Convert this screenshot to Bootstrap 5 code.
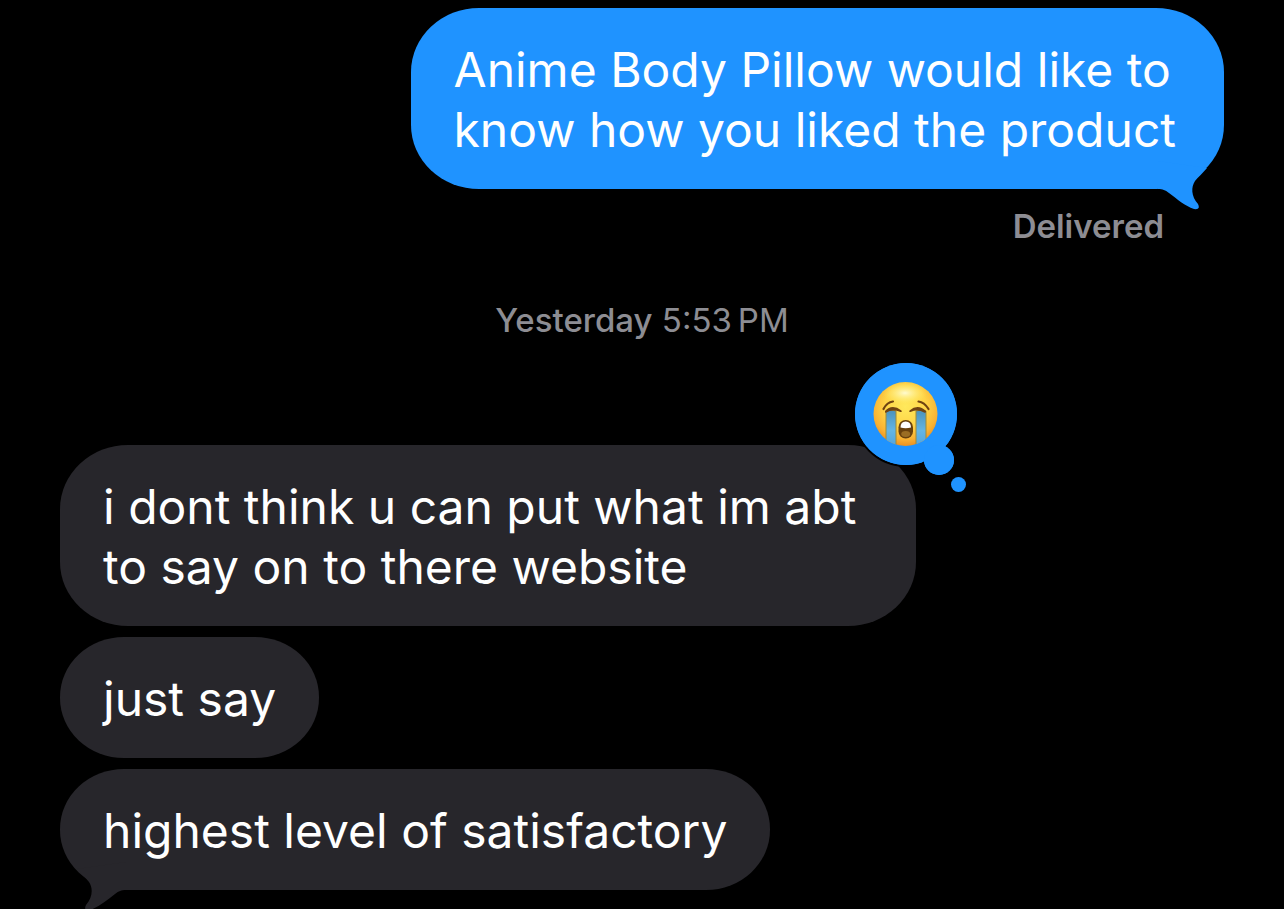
<!DOCTYPE html>
<html lang="en">
<head>
<meta charset="utf-8">
<meta name="viewport" content="width=device-width, initial-scale=1">
<title>Messages</title>
<link href="https://cdn.jsdelivr.net/npm/bootstrap@5.3.0/dist/css/bootstrap.min.css" rel="stylesheet">
<style>
  body { background: #000; color: #fff; font-family: Inter, "Liberation Sans", sans-serif; }
  .thread { padding: 8px 60px 0; }
  .bubble { padding: 32px 43px 29px; border-radius: 68px / 64px; font-size: 48px; line-height: 60px; max-width: 856px; }
  .bubble-line { border-radius: 64px / 60px; }
  .sent { background: #1f93ff; padding-right: 48px; }
  .received { background: #27262b; }
  .tail { width: 60px; height: 52px; bottom: -22px; }
  .tail-sent { right: 14px; fill: #1f93ff; }
  .tail-received { left: 14px; fill: #27262b; }
  .meta { color: #8d8d93; font-size: 33px; line-height: 40px; }
  .receipt { margin: 17px 60px 0 0; }
  .stamp { margin: 54px 0 105px; }
  .replies { gap: 11px; }
  .reaction { width: 116px; height: 136px; top: -85px; right: -52px; }
</style>
</head>
<body>
<main class="thread vh-100 overflow-hidden d-flex flex-column">
  <div class="bubble sent position-relative align-self-end">
    Anime Body Pillow would like to<br>know how you liked the product
    <svg class="tail tail-sent position-absolute" viewBox="0 0 60 52" aria-hidden="true"><path d="M8 30C13 30 15 31 19 34C27 40 35 47 44 50Q51 51 48 45C41 37 41 28 45 22C48 18 53 14 57 9L8 2Z"/></svg>
  </div>
  <div class="meta receipt fw-semibold align-self-end">Delivered</div>
  <div class="meta stamp text-center"><span class="fw-medium">Yesterday</span> 5:53&#8239;PM</div>
  <div class="replies d-flex flex-column align-items-start">
    <div class="bubble received position-relative">
      i dont think u can put what im abt to say on to there website
      <svg class="reaction position-absolute" viewBox="852 360 116 136" role="img" aria-label="Loudly crying face">
        <defs>
          <radialGradient id="face" cx=".5" cy=".38" r=".64"><stop offset="0" stop-color="#ffe95c"/><stop offset=".5" stop-color="#ffd447"/><stop offset=".8" stop-color="#f9b233"/><stop offset="1" stop-color="#ea8a1c"/></radialGradient>
          <linearGradient id="tear" x1="0" y1="0" x2="0" y2="1"><stop offset="0" stop-color="#4b91bb"/><stop offset=".5" stop-color="#64b5e4"/><stop offset="1" stop-color="#4c9fdc"/></linearGradient>
          <radialGradient id="shine"><stop offset="0" stop-color="#fffbd0"/><stop offset="1" stop-color="#fff06a" stop-opacity="0"/></radialGradient>
          <clipPath id="head"><circle cx="905.500" cy="414" r="32"/></clipPath>
        </defs>
        <g fill="#1f93ff" stroke="#000" stroke-width="4" paint-order="stroke">
          <circle cx="906" cy="414" r="51"/>
          <circle cx="939" cy="460" r="15"/>
          <circle cx="958.500" cy="484.500" r="7.500"/>
        </g>
        <circle cx="906" cy="414" r="51" fill="#1f93ff"/>
        <circle cx="939" cy="460" r="15" fill="#1f93ff"/>
        <circle cx="905.500" cy="414" r="32" fill="url(#face)"/>
        <ellipse cx="905" cy="393" rx="22" ry="11" fill="url(#shine)"/>
        <g clip-path="url(#head)">
          <path d="M886 411q5-2 10 0v40h-10zM916 411q5-2 10 0v40h-10z" fill="url(#tear)" stroke="#9c8a3a" stroke-width="1"/>
        </g>
        <path d="M883.500 409C885.500 405 889 402 893 401.500M918.500 401.500C923 402 926 405 928.500 409" fill="none" stroke="#704312" stroke-linecap="round" stroke-width="2.200"/>
        <path d="M885 411Q892 403.500 901.500 410.500Q902.500 412.500 900.500 412Q892 409 886.500 412.500Q884.500 413.500 885 411ZM909.500 410.500Q918 403.500 926 411Q926.500 413.500 924 412.500Q918 409 910.500 412Q908.500 412.500 909.500 410.500Z" fill="#704312"/>
        <rect x="898.500" y="420" width="14.500" height="18.500" rx="7.200" fill="#68400d"/>
        <path d="M900.500 427.500Q900.500 421.500 905.700 421.500T911 427.500Q905.500 429 900.500 427.500Z" fill="#fff"/>
        <ellipse cx="905.700" cy="434" rx="4.500" ry="3" fill="#9b6d23"/>
      </svg>
    </div>
    <div class="bubble bubble-line received">just say</div>
    <div class="bubble bubble-line received position-relative">
      highest level of satisfactory
      <svg class="tail tail-received position-absolute" viewBox="0 0 60 52" aria-hidden="true"><path transform="matrix(-1 0 0 1 60 0)" d="M8 30C13 30 15 31 19 34C27 40 35 47 44 50Q51 51 48 45C41 37 41 28 45 22C48 18 53 14 57 9L8 2Z"/></svg>
    </div>
  </div>
</main>
<script src="https://cdn.jsdelivr.net/npm/bootstrap@5.3.0/dist/js/bootstrap.bundle.min.js"></script>
</body>
</html>
